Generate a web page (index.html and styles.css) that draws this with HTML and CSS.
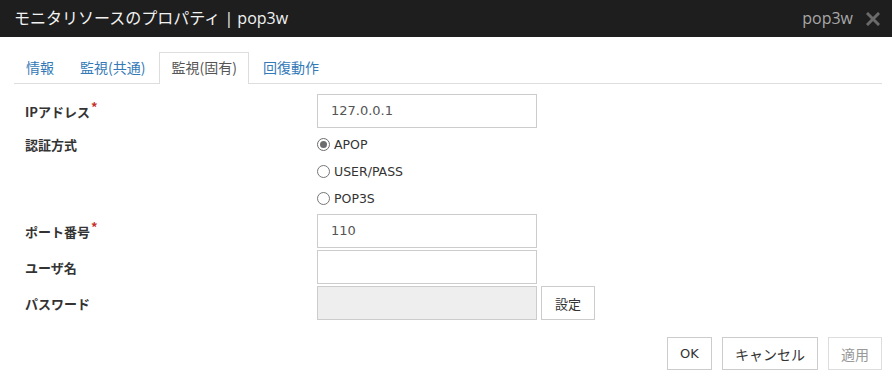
FILE: index.html
```html
<!DOCTYPE html>
<html lang="ja">
<head>
<meta charset="utf-8">
<link rel="stylesheet" href="styles.css">
</head>
<body>
<div class="dialog">
  <div class="titlebar">
    <div class="title">モニタリソースのプロパティ | pop3w</div>
    <div class="title-right">
      <span class="title-name">pop3w</span>
      <svg class="close" width="14" height="14" viewBox="0 0 14 14"><path d="M2 2L12 12M12 2L2 12" stroke="#6a6a6a" stroke-width="3" stroke-linecap="square"/></svg>
    </div>
  </div>
  <div class="tabs">
    <div class="tab">情報</div>
    <div class="tab">監視(共通)</div>
    <div class="tab active">監視(固有)</div>
    <div class="tab">回復動作</div>
  </div>
  <div class="form">
    <div class="label">IPアドレス<span class="req">*</span></div>
    <div class="field"><div class="input">127.0.0.1</div></div>

    <div class="label label-top">認証方式</div>
    <div class="radios">
      <div class="radio-row"><span class="radio checked"></span>APOP</div>
      <div class="radio-row"><span class="radio"></span>USER/PASS</div>
      <div class="radio-row"><span class="radio"></span>POP3S</div>
    </div>

    <div class="label">ポート番号<span class="req">*</span></div>
    <div class="field"><div class="input">110</div></div>

    <div class="label">ユーザ名</div>
    <div class="field"><div class="input"></div></div>

    <div class="label">パスワード</div>
    <div class="field"><div class="input disabled"></div><div class="btn small">設定</div></div>
  </div>
  <div class="footer">
    <div class="btn ok">OK</div>
    <div class="btn cancel">キャンセル</div>
    <div class="btn apply">適用</div>
  </div>
</div>
</body>
</html>
```

FILE: styles.css
```css
html, body {
  margin: 0;
  padding: 0;
  background: #fff;
}
body {
  font-family: "Noto Sans CJK JP", "Noto Sans", sans-serif;
  color: #333;
  width: 892px;
  height: 378px;
  overflow: hidden;
}
.titlebar {
  height: 37px;
  background: #1e1e1e;
  display: flex;
  align-items: center;
  justify-content: space-between;
  padding: 0 12px 0 14px;
}
.title {
  font-family: "Open Sans", "Noto Sans CJK JP", sans-serif;
  color: #f2f2f2;
  font-size: 16px;
  line-height: 37px;
}
.title-right {
  display: flex;
  align-items: center;
  gap: 13px;
}
.title-name {
  font-family: "Open Sans", "Noto Sans CJK JP", sans-serif;
  color: #a8a8a8;
  font-size: 16px;
  line-height: 37px;
}
.close {
  display: block;
}
.tabs {
  display: flex;
  margin: 15px 10px 0 14px;
  border-bottom: 1px solid #ddd;
  height: 31px;
}
.tab {
  padding: 0 11px;
  margin-right: 2px;
  font-size: 14px;
  line-height: 29px;
  color: #337ab7;
  border: 1px solid transparent;
  border-bottom: none;
}
.tab.active {
  color: #555;
  border-color: #ddd;
  background: #fff;
  height: 31px;
  margin-bottom: -1px;
}
.form {
  display: grid;
  grid-template-columns: 292px 575px;
  row-gap: 2px;
  margin: 10px 0 0 25px;
}
.label {
  font-size: 13px;
  font-weight: bold;
  color: #333;
  display: flex;
  align-items: center;
  height: 34px;
}
.label-top {
  height: 27px;
  margin-top: 1px;
}
.req {
  color: #c9302c;
  font-size: 13px;
  line-height: 13px;
  align-self: flex-start;
  margin-top: 6px;
  margin-left: 1px;
}
.field {
  display: flex;
  gap: 4px;
}
.input {
  height: 32px;
  border: 1px solid #ccc;
  font-family: "DejaVu Sans", "Noto Sans CJK JP", sans-serif;
  font-size: 13px;
  line-height: 32px;
  color: #555;
  padding-left: 13px;
  box-sizing: content-box;
  width: 205px;
}
.input.disabled {
  background: #eee;
}
.radios {
  display: flex;
  flex-direction: column;
  margin-top: 1px;
}
.radio-row {
  height: 27px;
  display: flex;
  align-items: center;
  font-family: "DejaVu Sans", "Noto Sans CJK JP", sans-serif;
  font-size: 12.5px;
  color: #333;
}
.radio {
  width: 11px;
  height: 11px;
  border: 1px solid #767676;
  border-radius: 50%;
  margin-right: 4px;
  position: relative;
  background: #fff;
}
.radio.checked {
  border-color: #6d6d6d;
}
.radio.checked::after {
  content: "";
  position: absolute;
  left: 2px;
  top: 2px;
  width: 7px;
  height: 7px;
  border-radius: 50%;
  background: #6d6d6d;
}
.btn {
  border: 1px solid #ccc;
  font-size: 14px;
  color: #333;
  display: flex;
  align-items: center;
  justify-content: center;
  height: 31px;
  box-sizing: content-box;
}
.btn.small {
  width: 52px;
  height: 32px;
  font-size: 13px;
}
.footer {
  display: flex;
  justify-content: flex-end;
  gap: 10px;
  margin: 17px 10px 0 0;
}
.btn.ok { width: 43px; font-family: "DejaVu Sans", "Noto Sans CJK JP", sans-serif; font-size: 13px; }
.btn.cancel { width: 94px; }
.btn.apply { width: 52px; color: #999; border-color: #ddd; }
```
